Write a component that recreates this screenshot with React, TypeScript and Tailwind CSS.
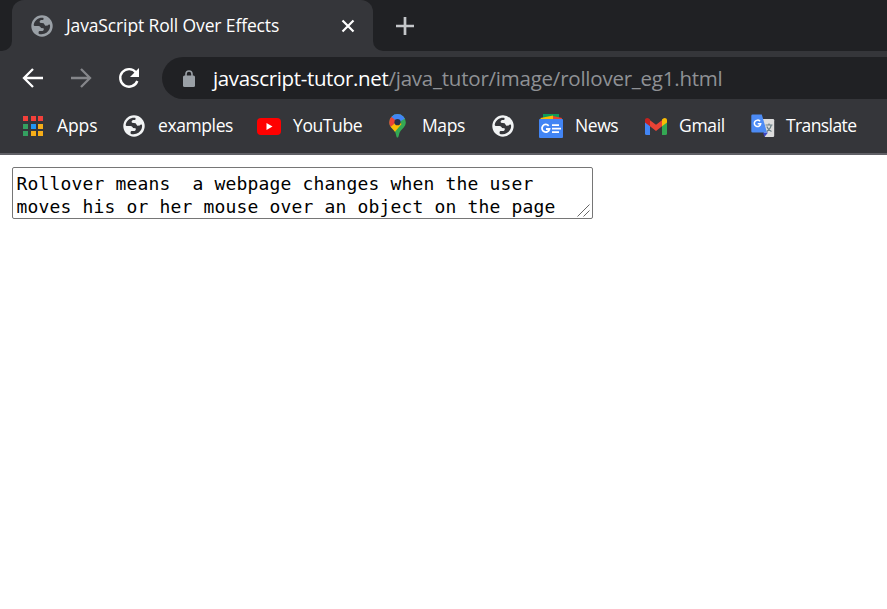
import type { ReactNode } from "react";

function Globe({ color, hole }: { color: string; hole: string }) {
  return (
    <svg width="22" height="22" viewBox="0 0 22 22" className="shrink-0">
      <circle cx="11" cy="11" r="10.7" fill={color} />
      <path
        d="M12.600 2.900C8.300 2 4 4.700 2.800 9.200c-.2 1 .1 1.700.8 1.800l3.900.1c1.500.2 2.100.9 2.500 1.900l2.600.3.2 1.600-1.200 1H8.300l-.8 1.200.3 1.800c4.600 1.500 9.400-1.100 10.900-5.300.4-1.200.5-2.500.3-3.700-.9-.6-1.700-.2-2.300.6l-2.400.2-1.700-2.400-3.700-.5-.3-1.500 1.300-1.200 2.400-.2z"
        fill={hole}
      />
    </svg>
  );
}

function AppsIcon() {
  const colors = ["#f3403a", "#f3403a", "#f3403a", "#34a060", "#2196f3", "#f5ad18", "#34a060", "#f5ad18", "#f5ad18"];
  return (
    <div className="grid w-5 shrink-0 grid-cols-3 gap-[2.5px]">
      {colors.map((c, i) => (
        <span key={i} className="h-[5px] w-[5px]" style={{ backgroundColor: c }} />
      ))}
    </div>
  );
}

function YouTubeIcon() {
  return (
    <svg width="24" height="17" viewBox="0 0 24 17" className="shrink-0">
      <rect width="24" height="17" rx="4" fill="#f00" />
      <path d="M9.500 5v7l6-3.500z" fill="#fff" />
    </svg>
  );
}

function MapsIcon() {
  return (
    <svg width="17" height="24" viewBox="0 0 17 24" className="shrink-0">
      <clipPath id="pin">
        <path d="M8.500 0A8.300 8.300 0 0 0 .2 8.300c0 4.400 3.600 6.300 5.700 9.500 1.400 2.100 1.100 5.800 2.600 5.800s1.200-3.700 2.600-5.800c2.100-3.200 5.700-5.100 5.700-9.500A8.300 8.300 0 0 0 8.500 0z" />
      </clipPath>
      <g clipPath="url(#pin)">
        <path d="M0 0h17v24H0z" fill="#34a853" />
        <path d="M2 3L6-1h11v5L8.500 9z" fill="#4285f4" />
        <path d="M0 14L8.500 5l4 5-8 9.500z" fill="#fbbc04" />
        <path d="M-1 3l3-.5 6 5L1.500 13-1 10z" fill="#ea4335" />
      </g>
      <circle cx="8.500" cy="8.200" r="3.100" fill="#28304a" />
    </svg>
  );
}

function NewsIcon() {
  return (
    <svg width="24" height="24" viewBox="0 0 24 24" className="shrink-0">
      <path d="M4 0h16v8H4z" fill="#0c9d58" />
      <path d="M14 2l9 2-1 4h-8z" fill="#ea4335" />
      <path d="M1.500 4L14 1.500V7H2z" fill="#fbbc04" />
      <rect y="5" width="24" height="19" rx="1" fill="#4285f4" />
      <path d="M9.700 11.800A3.800 3.800 0 1 0 10.500 15H7" fill="none" stroke="#fff" strokeWidth="1.800" />
      <path d="M13 11.200h7M13 14.700h9M13 18.200h7" stroke="#fff" strokeWidth="1.800" />
    </svg>
  );
}

function GmailIcon() {
  return (
    <svg width="22" height="17" viewBox="0 0 22 17" className="shrink-0">
      <path d="M0 3l5 3.500V17H1.500A1.500 1.500 0 0 1 0 15.500z" fill="#4285f4" />
      <path d="M17 6.500L22 3v12.500a1.500 1.500 0 0 1-1.500 1.500H17z" fill="#34a853" />
      <path d="M5 2.200l6 4.600 6-4.600v6.100l-6 4.600-6-4.600z" fill="#ea4335" />
      <path d="M0 4.500V2.300C0 .4 2.200-.6 3.800.600L5 1.500v6.800z" fill="#c5221f" />
      <path d="M22 4.500V2.300C22 .4 19.800-.6 18.200.600L17 1.500v6.800z" fill="#fbbc04" />
    </svg>
  );
}

function TranslateIcon() {
  return (
    <svg width="24" height="24" viewBox="0 0 24 24" className="shrink-0">
      <path d="M10 5h12a1.200 1.200 0 0 1 1.200 1.200v15.600A1.200 1.200 0 0 1 22 23h-8z" fill="#dcdcdc" />
      <path d="M12 18.500h5L13.500 23z" fill="#3b45c4" />
      <path d="M1.500.500h9.300L16 18.500H1.500a1.200 1.200 0 0 1-1.200-1.200V1.700A1.200 1.200 0 0 1 1.500.500z" fill="#4c8bf5" />
      <path d="M9 7.300A3.200 3.200 0 1 0 9.700 9.700H6.700" fill="none" stroke="#fff" strokeWidth="1.500" />
      <path d="M14.500 11h7M18 9.500V11M20.300 11c-.5 3-2.300 5-4.500 6.500M15.800 12.500c.8 2.300 2.500 4 4.700 5" fill="none" stroke="#6b7f86" strokeWidth="1.200" />
    </svg>
  );
}

function Bookmark({ icon, label, box, text }: { icon: ReactNode; label?: string; box: string; text?: string }) {
  return (
    <div className={`flex h-full shrink-0 items-center ${box}`}>
      {icon}
      {label && <span className={`whitespace-nowrap pb-px ${text}`}>{label}</span>}
    </div>
  );
}

export default function App() {
  return (
    <div className="flex h-[609px] w-[887px] flex-col overflow-hidden bg-white font-['Open_Sans','Noto_Sans',sans-serif] text-white">
      <div className="flex h-[51px] shrink-0 bg-[#35363a]">
        <div className="w-3 rounded-br-[10px] bg-[#202124]" />
        <div className="w-[361px] bg-[#202124]">
          <div className="flex h-full items-center rounded-t-[12px] bg-[#35363a] pl-[19px]">
            <Globe color="#9aa0a6" hole="#35363a" />
            <span className="ml-[13px] w-[275px] whitespace-nowrap text-[17.5px] tracking-[-0.13px]">JavaScript Roll Over Effects</span>
            <svg width="14" height="14" viewBox="0 0 14 14">
              <path d="M1.500 1.500l11 11M12.500 1.500l-11 11" stroke="#fff" strokeWidth="2.200" />
            </svg>
          </div>
        </div>
        <div className="flex flex-1 items-center rounded-bl-[10px] bg-[#202124] pl-[22px]">
          <svg width="20" height="20" viewBox="0 0 20 20">
            <path d="M10 1v18M1 10h18" stroke="#c4c6c9" strokeWidth="2.700" />
          </svg>
        </div>
      </div>

      <div className="flex h-[54px] shrink-0 items-center bg-[#35363a] pl-[22px]">
        <svg width="22" height="20" viewBox="0 0 22 20" fill="none" stroke="#fff" strokeWidth="2.300">
          <path d="M21 10H2.500M11 1l-9 9 9 9" />
        </svg>
        <svg width="22" height="20" viewBox="0 0 22 20" fill="none" stroke="#85868a" strokeWidth="2.300" className="ml-[26px]">
          <path d="M1 10h18.500M11 1l9 9-9 9" />
        </svg>
        <svg width="22" height="22" viewBox="0 0 22 22" className="ml-[26px]">
          <path d="M18 5.500A8.800 8.800 0 1 0 19.300 14" fill="none" stroke="#fff" strokeWidth="2.400" />
          <path d="M21 1v9h-9z" fill="#fff" />
        </svg>
        <div className="ml-[22px] flex h-[42px] flex-1 items-center rounded-l-full bg-[#202124] pl-[21px]">
          <svg width="12" height="17" viewBox="0 0 12 17">
            <path d="M3 7V4a3 3 0 0 1 6 0v3" fill="none" stroke="#9aa0a6" strokeWidth="1.600" />
            <rect y="5.500" width="12" height="11.500" rx="1.500" fill="#9aa0a6" />
          </svg>
          <span className="ml-[18px] whitespace-nowrap text-[20.5px] tracking-[-0.23px] text-[#8f9195]">
            <span className="tracking-[-0.35px] text-white">javascript-tutor.net</span>/java_tutor/image/rollover_eg1.html
          </span>
        </div>
      </div>

      <div className="flex h-[50px] shrink-0 items-center border-b-2 border-[#606066] bg-[#35363a] pb-[6px] pl-[23px] text-[17.5px] tracking-[-0.4px]">
        <Bookmark box="w-[100px]" text="ml-3.5 tracking-[-0.1px]" icon={<AppsIcon />} label="Apps" />
        <Bookmark box="w-[134px]" text="ml-[13px]" icon={<Globe color="#f1f3f4" hole="#35363a" />} label="examples" />
        <Bookmark box="w-[132px]" text="ml-3" icon={<YouTubeIcon />} label="YouTube" />
        <Bookmark box="w-[103px]" text="ml-4" icon={<MapsIcon />} label="Maps" />
        <Bookmark box="w-[47px]" icon={<Globe color="#f1f3f4" hole="#35363a" />} />
        <Bookmark box="w-[106px]" text="ml-3" icon={<NewsIcon />} label="News" />
        <Bookmark box="w-[106px]" text="ml-3 tracking-[-0.3px]" icon={<GmailIcon />} label="Gmail" />
        <Bookmark box="w-[112px]" text="ml-[11px] tracking-[-0.6px]" icon={<TranslateIcon />} label="Translate" />
      </div>

      <main className="flex-1 bg-white pl-3 pt-3">
        <div className="flex h-[52px] w-[581px] items-end justify-between rounded-[2px] border border-[#767676] pb-px pl-[3.5px] pr-0.5">
          <p className="self-start whitespace-pre pt-[4px] font-['DejaVu_Sans_Mono',monospace] text-[18px] leading-[23px] tracking-[0.163px] text-black">
            {"Rollover means  a webpage changes when the user\nmoves his or her mouse over an object on the page"}
          </p>
          <svg width="13" height="13" viewBox="0 0 13 13">
            <path d="M.5 12.500l12-12M6.500 12.500l6-6" stroke="#666" strokeWidth="1" />
          </svg>
        </div>
      </main>
    </div>
  );
}
